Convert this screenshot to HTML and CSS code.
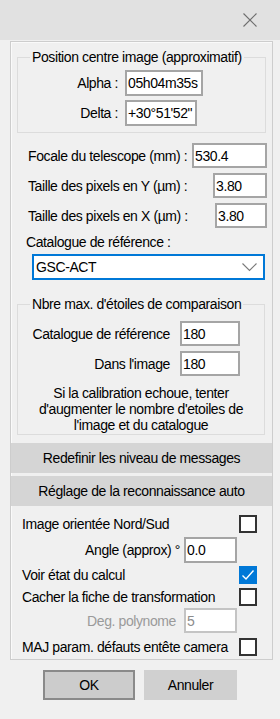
FILE: index.html
```html
<!DOCTYPE html>
<html lang="fr">
<head>
    <meta charset="UTF-8">
    <meta name="viewport" content="width=device-width, initial-scale=1.0">
    <title>Calibration astrométrique</title>
    <link rel="stylesheet" href="styles.css">
</head>
<body>
    <div class="titlebar">
        <svg class="close" width="14" height="14" viewBox="0 0 14 14">
            <path d="M0.5 0.5 L13.5 13.5 M13.5 0.5 L0.5 13.5" stroke="#6e6e6e" stroke-width="1.1" fill="none"/>
        </svg>
    </div>

    <div class="panel">
        <fieldset class="group group-pos">
            <legend>Position centre image (approximatif)</legend>
            <div class="pos-row">
                <label>Alpha :</label>
                <input class="field alpha" type="text" value="05h04m35s">
            </div>
            <div class="pos-row">
                <label>Delta :</label>
                <input class="field delta" type="text" value="+30°51'52&quot;">
            </div>
        </fieldset>

        <div class="line-row first">
            <label>Focale du telescope (mm) :</label>
            <input class="field focale" type="text" value="530.4">
        </div>
        <div class="line-row">
            <label>Taille des pixels en Y (µm) :</label>
            <input class="field pix-y" type="text" value="3.80">
        </div>
        <div class="line-row">
            <label>Taille des pixels en X (µm) :</label>
            <input class="field pix-x" type="text" value="3.80">
        </div>

        <div class="cat-label">Catalogue de référence :</div>
        <div class="combo">
            <span>GSC-ACT</span>
            <svg width="15" height="9" viewBox="0 0 15 9">
                <polyline points="0.5,0.5 7.5,7.5 14.5,0.5" stroke="#7a7a7a" stroke-width="1.1" fill="none"/>
            </svg>
        </div>

        <fieldset class="group group-nb">
            <legend>Nbre max. d'étoiles de comparaison</legend>
            <div class="nb-row">
                <label>Catalogue de référence</label>
                <input class="field nb" type="text" value="180">
            </div>
            <div class="nb-row">
                <label>Dans l'image</label>
                <input class="field nb" type="text" value="180">
            </div>
            <p class="note">Si la calibration echoue, tenter<br>d'augmenter le nombre d'etoiles de<br>l'image et du catalogue</p>
        </fieldset>

        <div class="band first">Redefinir les niveau de messages</div>
        <div class="band">Réglage de la reconnaissance auto</div>

        <div class="opt-row r-nord">
            <span>Image orientée Nord/Sud</span>
            <span class="check"></span>
        </div>
        <div class="val-row r-angle">
            <label>Angle (approx) °</label>
            <input class="field small" type="text" value="0.0">
        </div>
        <div class="opt-row r-voir">
            <span>Voir état du calcul</span>
            <span class="check checked">
                <svg width="14" height="14" viewBox="0 0 14 14">
                    <polyline points="1.5,7.5 5,11 12.5,2.5" stroke="#fff" stroke-width="1.4" fill="none"/>
                </svg>
            </span>
        </div>
        <div class="opt-row r-cacher">
            <span>Cacher la fiche de transformation</span>
            <span class="check"></span>
        </div>
        <div class="val-row r-deg disabled">
            <label>Deg. polynome</label>
            <input class="field small" type="text" value="5" disabled>
        </div>
        <div class="opt-row r-maj">
            <span>MAJ param. défauts entête camera</span>
            <span class="check"></span>
        </div>
    </div>

    <div class="buttons">
        <button class="btn default">OK</button>
        <button class="btn">Annuler</button>
    </div>
</body>
</html>
```

FILE: styles.css
```css
body {
    margin: 0;
    background: #f0f0f0;
    font-family: "Liberation Sans", Arial, sans-serif;
    font-size: 14px;
    letter-spacing: -0.4px;
    white-space: nowrap;
    color: #000;
}
.titlebar {
    height: 40px;
    background: #e1e1e1;
    display: flex;
    justify-content: flex-end;
    align-items: center;
    padding-right: 23px;
}
.panel {
    margin: 1px 7px 0 10px;
    border: 1px solid #cdcdcd;
    box-shadow: inset 1px 1px 0 #fafafa;
    padding-bottom: 1px;
}
.group {
    margin: 0;
    padding: 0;
    min-width: 0;
    border: 1px solid #dcdcdc;
}
.group legend {
    margin-left: 12px;
    padding: 0 2px;
    line-height: 16px;
}
.group-pos {
    margin: 7px 6px 0 6px;
    padding: 5px 0 6px 0;
}
.group-nb {
    margin: 16px 7px 0 6px;
    padding: 9px 0 1px 0;
}
.field {
    box-sizing: border-box;
    height: 25px;
    border: 2px solid #a5a5a5;
    background: #fff;
    font: inherit;
    letter-spacing: inherit;
    color: #000;
    padding: 0 1px;
    margin: 0;
    outline: none;
}
.field:disabled {
    border-color: #c4c4c4;
    color: #8c8c8c;
    background: #fff;
}
.pos-row {
    display: flex;
    align-items: center;
    height: 26px;
    margin-bottom: 4px;
}
.pos-row:last-child {
    margin-bottom: 0;
}
.pos-row label {
    width: 100px;
    text-align: right;
    margin-right: 7px;
}
.pos-row .field {
    height: 26px;
}
.alpha { width: 78px; }
.delta { width: 72px; }

.line-row {
    display: flex;
    justify-content: space-between;
    align-items: center;
    height: 25px;
    margin-top: 5px;
    padding: 0 5px 0 17px;
}
.line-row.first {
    margin-top: 10px;
}
.focale { width: 75px; }
.pix-y { width: 54px; }
.pix-x { width: 52px; }

.cat-label {
    line-height: 16px;
    margin: 6px 0 0 15px;
}
.combo {
    box-sizing: border-box;
    height: 26px;
    margin: 4px 7px 0 21px;
    border: 2px solid #0078d7;
    background: #fff;
    display: flex;
    justify-content: space-between;
    align-items: center;
    padding: 0 6px 0 2px;
}

.nb-row {
    display: flex;
    align-items: center;
    height: 25px;
    margin-bottom: 5px;
}
.nb-row label {
    width: 152px;
    text-align: right;
    margin-right: 10px;
}
.nb { width: 60px; }
.note {
    margin: 9px 0 0 0;
    padding: 0;
    text-align: center;
    line-height: 16px;
}

.band {
    height: 30px;
    line-height: 30px;
    background: #d5d5d5;
    text-align: center;
    margin-top: 3px;
}
.band.first {
    margin-top: 8px;
}

.opt-row, .val-row {
    display: flex;
    align-items: center;
    height: 22px;
    padding: 0 15px 0 11px;
}
.opt-row {
    justify-content: space-between;
}
.check {
    box-sizing: border-box;
    width: 18px;
    height: 18px;
    border: 2px solid #333;
    background: #fff;
    display: flex;
    align-items: center;
    justify-content: center;
}
.check.checked {
    background: #0078d7;
    border-color: #0078d7;
}
.val-row label {
    width: 169px;
    text-align: right;
    margin-right: 4px;
}
.small { width: 53px; }

.r-nord { height: 24px; margin-top: 6px; }
.r-angle { height: 26px; margin-top: 1px; padding-left: 0; }
.r-angle .field { height: 26px; }
.r-voir { margin-top: 1px; }
.r-deg { height: 25px; padding-left: 0; }
.r-deg label {
    width: 165px;
    margin-right: 8px;
    color: #9a9a9a;
}
.r-maj { margin-top: 3px; }

.buttons {
    display: flex;
    justify-content: center;
    gap: 9px;
    margin-top: 10px;
}
.btn {
    box-sizing: border-box;
    width: 93px;
    height: 30px;
    font: inherit;
    letter-spacing: inherit;
    color: #000;
    background: #d0d0d0;
    border: 1px solid #d0d0d0;
    padding: 0;
}
.btn.default {
    width: 92px;
    background: #cccccc;
    border: 2px solid #8a8a8a;
}
```
